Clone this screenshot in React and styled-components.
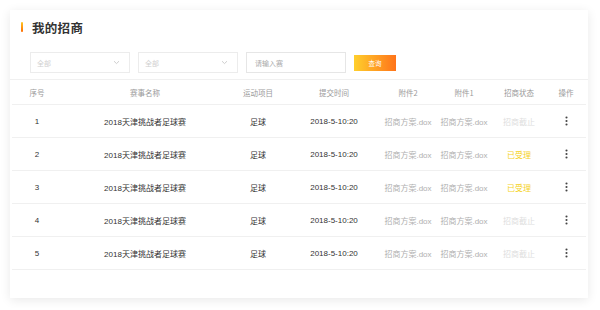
import React from "react";
import styled, { createGlobalStyle } from "styled-components";

const GlobalStyle = createGlobalStyle`
  * { box-sizing: border-box; }
  body {
    margin: 0;
    background: #ffffff;
    font-family: "Liberation Sans", "Noto Sans CJK SC", sans-serif;
  }
`;

const rows = [
  { id: 1, status: "closed" },
  { id: 2, status: "accepted" },
  { id: 3, status: "accepted" },
  { id: 4, status: "closed" },
  { id: 5, status: "closed" }
];

const columns = "50px 166px 60px 92px 56px 56px 54px 40px";

export default function App() {
  return (
    <>
      <GlobalStyle />
      <Card>
        <TitleRow>
          <TitleBar />
          <h1>我的招商</h1>
        </TitleRow>
        <FilterRow>
          <Select>
            <span>全部</span>
            <Chevron />
          </Select>
          <Select>
            <span>全部</span>
            <Chevron />
          </Select>
          <SearchInput>请输入赛</SearchInput>
          <QueryButton>查询</QueryButton>
        </FilterRow>
        <Table>
          <HeaderRow>
            <div>序号</div>
            <div>赛事名称</div>
            <div>运动项目</div>
            <div>提交时间</div>
            <div>附件2</div>
            <div>附件1</div>
            <div>招商状态</div>
            <div>操作</div>
          </HeaderRow>
          {rows.map((row) => (
            <BodyRow key={row.id}>
              <div>{row.id}</div>
              <div>2018天津挑战者足球赛</div>
              <div>足球</div>
              <div>2018-5-10:20</div>
              <Attachment>招商方案.dox</Attachment>
              <Attachment>招商方案.dox</Attachment>
              <Status $status={row.status}>
                {row.status === "accepted" ? "已受理" : "招商截止"}
              </Status>
              <div>
                <Kebab />
              </div>
            </BodyRow>
          ))}
        </Table>
      </Card>
    </>
  );
}

function Chevron() {
  return (
    <svg width="7" height="5" viewBox="0 0 7 5">
      <path d="M1 1.2 L3.5 3.6 L6 1.2" fill="none" stroke="#c8c8c8" strokeWidth="0.9" />
    </svg>
  );
}

function Kebab() {
  return (
    <svg width="3" height="10" viewBox="0 0 3 10" style={{ display: "block", margin: "0 auto" }}>
      <circle cx="1.5" cy="1.5" r="1.05" fill="#444" />
      <circle cx="1.5" cy="5" r="1.05" fill="#444" />
      <circle cx="1.5" cy="8.5" r="1.05" fill="#444" />
    </svg>
  );
}

const Card = styled.div`
  margin: 10px;
  width: 578px;
  height: 288px;
  background: #fff;
  box-shadow: 0 2px 10px rgba(0, 0, 0, 0.09);
  display: flex;
  flex-direction: column;
`;

const TitleRow = styled.div`
  display: flex;
  align-items: center;
  gap: 9px;
  padding: 9px 0 0 11px;
  height: 25px;
  h1 {
    margin: 0;
    font-size: 12.5px;
    font-weight: bold;
    color: #333;
    font-family: "Noto Sans CJK SC", sans-serif;
    letter-spacing: 0.3px;
  }
`;

const TitleBar = styled.div`
  width: 2px;
  height: 10px;
  border-radius: 1px;
  background: linear-gradient(180deg, #ffc824, #ff6a00);
`;

const FilterRow = styled.div`
  display: flex;
  align-items: center;
  gap: 8px;
  padding: 0 0 0 20px;
  margin-top: 17px;
  height: 21px;
`;

const Select = styled.div`
  width: 100px;
  height: 21px;
  border: 1px solid #ececec;
  display: flex;
  align-items: center;
  justify-content: space-between;
  padding: 0 9px 0 6px;
  font-size: 7px;
  color: #cfcfcf;
  font-family: "Noto Sans CJK SC", sans-serif;
`;

const SearchInput = styled.div`
  width: 100px;
  height: 21px;
  border: 1px solid #e6e6e6;
  display: flex;
  align-items: center;
  padding-left: 8px;
  font-size: 7px;
  color: #aaa;
  font-family: "Noto Sans CJK SC", sans-serif;
`;

const QueryButton = styled.div`
  width: 42px;
  height: 16px;
  display: flex;
  align-items: center;
  justify-content: center;
  background: linear-gradient(90deg, #ffcf2c, #ff741a);
  color: #fff;
  font-size: 6.5px;
  font-family: "Noto Sans CJK SC", sans-serif;
`;

const Table = styled.div`
  margin-top: 6px;
  border-top: 1px solid #f0f0f0;
`;

const HeaderRow = styled.div`
  display: grid;
  grid-template-columns: ${columns};
  height: 25px;
  align-items: center;
  font-size: 7.5px;
  color: #9a9a9a;
  font-family: "Noto Sans CJK SC", sans-serif;
  border-bottom: 1px solid #f0f0f0;
  margin: 0 2px;
  div {
    text-align: center;
    white-space: nowrap;
  }
`;

const BodyRow = styled.div`
  display: grid;
  grid-template-columns: ${columns};
  height: 33px;
  align-items: center;
  font-size: 8px;
  color: #333;
  border-bottom: 1px solid #f0f0f0;
  margin: 0 2px;
  div {
    text-align: center;
    white-space: nowrap;
  }
`;

const Attachment = styled.div`
  color: #b0b0b0;
`;

const Status = styled.div`
  color: ${(p) => (p.$status === "accepted" ? "#f5d21c" : "#dedede")};
`;
